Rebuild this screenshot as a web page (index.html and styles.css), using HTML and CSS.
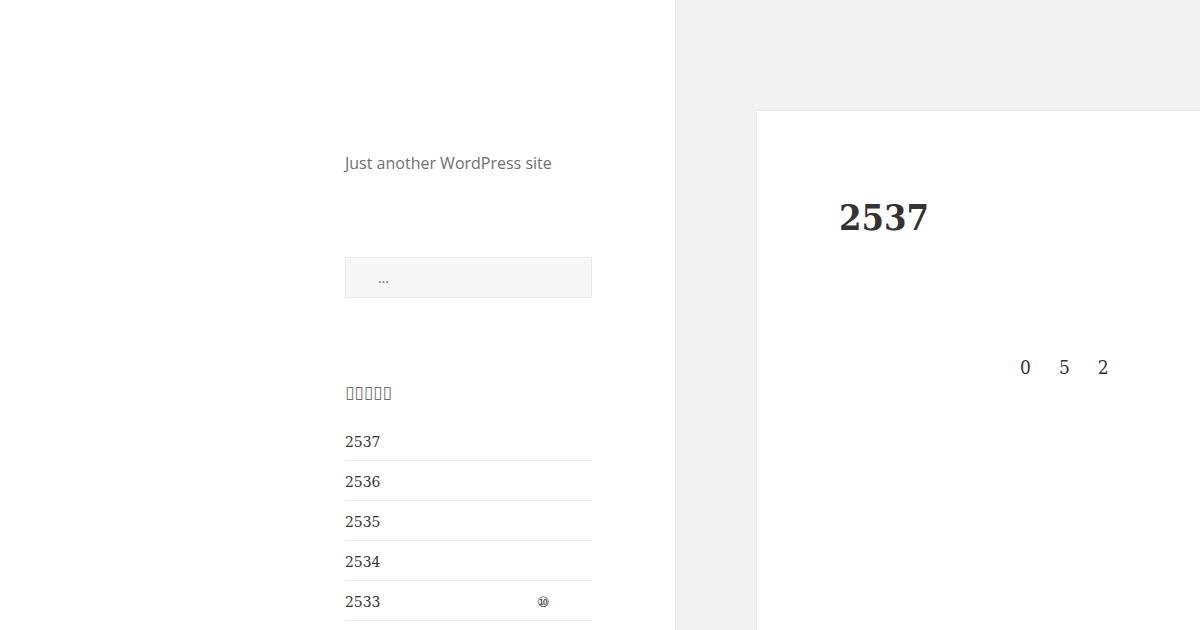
FILE: index.html
```html
<!DOCTYPE html>
<html lang="th">
<head>
    <meta charset="UTF-8">
    <meta name="viewport" content="width=device-width, initial-scale=1.0">
    <title>2537</title>
    <link rel="stylesheet" href="styles.css">
</head>
<body>
<div class="site">
  <aside class="sidebar">
    <p class="site-description">Just another WordPress site</p>

    <form class="search-form">
      <input type="search" class="search-field" placeholder="…">
    </form>

    <section class="widget">
      <h2 class="widget-title">▯▯▯▯▯</h2>
      <ul class="post-list">
        <li><a href="#">2537</a></li>
        <li><a href="#">2536</a></li>
        <li><a href="#">2535</a></li>
        <li><a href="#">2534</a></li>
        <li><a href="#" class="num">2533</a><span class="count">⑩</span></li>
      </ul>
    </section>
  </aside>

  <main class="content">
    <article class="entry">
      <h1 class="entry-title">2537</h1>
      <p class="entry-digits"><span>0</span><span>5</span><span>2</span></p>
    </article>
  </main>
</div>
</body>
</html>
```

FILE: styles.css
```css
body {
  margin: 0;
  padding: 0;
  background: #f1f1f1;
  font-family: "DejaVu Serif Condensed", "DejaVu Serif", serif;
  color: #333;
}

.site {
  display: flex;
  height: 630px;
  overflow: hidden;
}

.sidebar {
  width: 247px;
  flex-shrink: 0;
  background: #fff;
  padding: 151px 83px 0 345px;
  border-right: 1px solid #e8e8e8;
}

.site-description {
  font-family: "Open Sans", sans-serif;
  font-size: 16px;
  line-height: 24px;
  color: #707070;
  margin: 0 0 82px;
}

.search-form {
  margin: 0;
}

.search-field {
  box-sizing: border-box;
  width: 100%;
  height: 41px;
  padding: 0 0 0 32px;
  background: #f7f7f7;
  border: 1px solid #eaeaea;
  border-radius: 0;
  font-family: "Open Sans", sans-serif;
  font-size: 14px;
  color: #707070;
  outline: none;
}

.search-field::placeholder {
  color: #707070;
}

.widget {
  margin-top: 84px;
}

.widget-title {
  font-family: "DejaVu Sans", sans-serif;
  font-size: 17px;
  font-weight: normal;
  line-height: 20px;
  letter-spacing: 0;
  color: #707070;
  margin: 0 0 19px;
}

.post-list {
  list-style: none;
  margin: 0;
  padding: 0;
}

.post-list li {
  display: flex;
  align-items: center;
  padding: 10px 0 6px;
  line-height: 23px;
  border-bottom: 1px solid #eaeaea;
  font-size: 15.5px;
}

.post-list a {
  color: #333;
  text-decoration: none;
}

.post-list .num {
  width: 192px;
}

.count {
  font-family: "DejaVu Sans", sans-serif;
  font-size: 14px;
  color: #333;
}

.content {
  flex: 1;
  padding: 111px 0 0 81px;
}

.entry {
  background: #fff;
  min-height: 519px;
  padding: 79px 0 0 82px;
  box-shadow: 0 0 1px rgba(0, 0, 0, 0.15);
}

.entry-title {
  font-size: 36px;
  font-weight: bold;
  line-height: 54px;
  margin: 0;
  color: #333;
}

.entry-digits {
  display: flex;
  gap: 28px;
  margin: 109px 0 0 181px;
  font-size: 19px;
  line-height: 28px;
}
```
